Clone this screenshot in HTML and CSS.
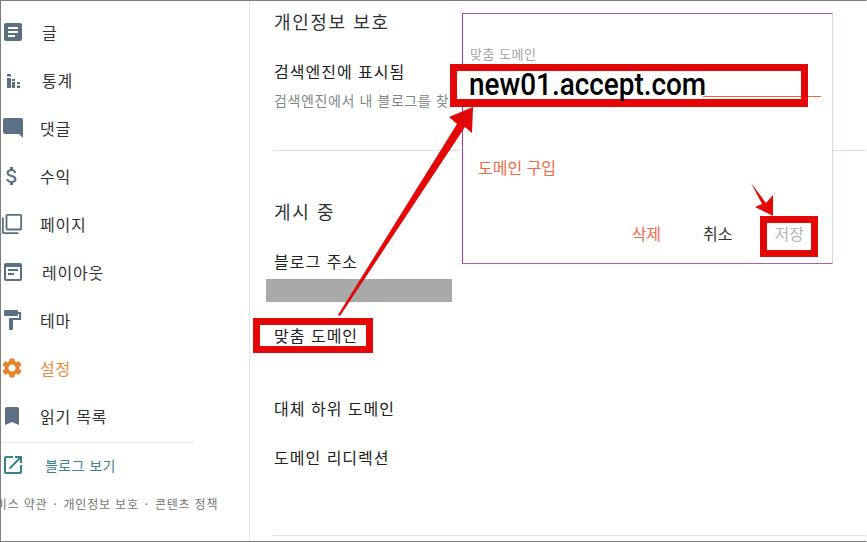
FILE: index.html
```html
<!DOCTYPE html>
<html lang="ko">
<head>
<meta charset="utf-8">
<title>설정</title>
<link rel="stylesheet" href="styles.css">
</head>
<body>
<div class="frame">
  <aside class="sidebar">
    <nav class="nav">
      <a class="item"><svg class="ico" viewBox="0 0 24 24"><path d="M19 3H5c-1.100 0-2 .9-2 2v14c0 1.100.9 2 2 2h14c1.100 0 2-.9 2-2V5c0-1.100-.9-2-2-2zm-5 14H7v-2h7v2zm3-4H7v-2h10v2zm0-4H7V7h10v2z"/></svg><span class="label l2">글</span></a>
      <a class="item"><svg class="ico" viewBox="0 0 24 24"><path d="M6 6h4v2.500H6zM6 10h4v10H6zM11 11h3v2h-3zM11 14h3v6h-3zM16 14h3v2h-3zM16 17.500h3V20h-3z"/></svg><span class="label l2">통계</span></a>
      <a class="item"><svg class="ico" viewBox="0 0 24 24"><path d="M21.990 4c0-1.100-.89-2-1.990-2H4c-1.100 0-2 .9-2 2v12c0 1.100.9 2 2 2h14l4 4-.01-18z"/></svg><span class="label">댓글</span></a>
      <a class="item"><svg class="ico shift" viewBox="0 0 24 24"><path d="M11.800 10.900c-2.270-.59-3-1.200-3-2.150 0-1.090 1.010-1.850 2.700-1.850 1.780 0 2.440.85 2.500 2.100h2.210c-.07-1.720-1.120-3.300-3.210-3.810V3h-3v2.160c-1.940.42-3.500 1.680-3.500 3.610 0 2.310 1.910 3.460 4.700 4.130 2.500.6 3 1.480 3 2.410 0 .69-.49 1.790-2.700 1.790-2.060 0-2.870-.92-2.980-2.100h-2.200c.12 2.190 1.760 3.420 3.680 3.830V21h3v-2.150c1.950-.37 3.500-1.500 3.500-3.550 0-2.840-2.430-3.810-4.700-4.400z"/></svg><span class="label">수익</span></a>
      <a class="item"><svg class="ico small" viewBox="0 0 24 24"><path d="M3 5H1v16c0 1.100.9 2 2 2h16v-2H3V5zm18-4H7c-1.100 0-2 .9-2 2v14c0 1.100.9 2 2 2h14c1.100 0 2-.9 2-2V3c0-1.100-.9-2-2-2zm0 16H7V3h14v14z"/></svg><span class="label">페이지</span></a>
      <a class="item"><svg class="ico" viewBox="0 0 24 24"><path d="M19 3H5c-1.100 0-2 .9-2 2v14c0 1.100.9 2 2 2h14c1.100 0 2-.9 2-2V5c0-1.100-.9-2-2-2zm0 16H5V7h14v12zM7 9h10v2H7zm0 4h6v2H7z"/></svg><span class="label l2">레이아웃</span></a>
      <a class="item"><svg class="ico shift" viewBox="0 0 24 24"><path d="M18 4V3c0-.55-.45-1-1-1H5c-.55 0-1 .45-1 1v4c0 .55.45 1 1 1h12c.55 0 1-.45 1-1V6h1v4H9v11c0 .55.45 1 1 1h2c.55 0 1-.45 1-1v-9h8V4h-3z"/></svg><span class="label">테마</span></a>
      <a class="item active"><svg class="ico shift" viewBox="0 0 24 24"><path d="M19.140 12.940c.04-.3.06-.61.06-.94 0-.32-.02-.64-.07-.94l2.030-1.580c.18-.14.23-.41.12-.61l-1.920-3.320c-.12-.22-.37-.29-.59-.22l-2.390.96c-.5-.38-1.030-.7-1.620-.94l-.36-2.540c-.04-.24-.24-.41-.48-.41h-3.840c-.24 0-.43.17-.47.41l-.36 2.540c-.59.24-1.130.57-1.620.94l-2.390-.96c-.22-.08-.47 0-.59.22L2.740 8.870c-.12.21-.08.47.12.61l2.030 1.580c-.05.3-.09.63-.09.94s.02.64.07.94l-2.030 1.580c-.18.14-.23.41-.12.61l1.920 3.320c.12.22.37.29.59.22l2.390-.96c.5.38 1.030.7 1.620.94l.36 2.540c.05.24.24.41.48.41h3.840c.24 0 .44-.17.47-.41l.36-2.540c.59-.24 1.130-.56 1.620-.94l2.390.96c.22.08.47 0 .59-.22l1.920-3.320c.12-.22.07-.47-.12-.61l-2.010-1.580zM12 15.600c-1.980 0-3.600-1.620-3.600-3.600s1.620-3.600 3.600-3.600 3.600 1.620 3.600 3.600-1.620 3.600-3.600 3.600z"/></svg><span class="label">설정</span></a>
      <a class="item"><svg class="ico shift" viewBox="0 0 24 24"><path d="M17 3H7c-1.100 0-2 .9-2 2v16l7-3 7 3V5c0-1.100-.9-2-2-2z"/></svg><span class="label">읽기 목록</span></a>
    </nav>
    <a class="view"><svg class="ico" viewBox="0 0 24 24"><path d="M19 19H5V5h7V3H5c-1.110 0-2 .9-2 2v14c0 1.100.89 2 2 2h14c1.100 0 2-.9 2-2v-7h-2v7zM14 3v2h3.590l-9.830 9.830 1.410 1.410L19 6.410V10h2V3h-7z"/></svg><span>블로그 보기</span></a>
    <p class="legal"><span>서비스 약관</span><span>·</span><span>개인정보 보호</span><span>·</span><span>콘텐츠 정책</span></p>
  </aside>
  <main class="main">
    <h2 class="heading first">개인정보 보호</h2>
    <div class="row-title search">검색엔진에 표시됨</div>
    <div class="hint">검색엔진에서 내 블로그를 찾</div>
    <hr class="rule">
    <h2 class="heading publishing">게시 중</h2>
    <div class="row-title address">블로그 주소</div>
    <div class="redact"></div>
    <div class="row-title custom">맞춤 도메인</div>
    <div class="row-title alt">대체 하위 도메인</div>
    <div class="row-title redirect">도메인 리디렉션</div>
    <hr class="rule bottom">
  </main>
  <section class="dialog">
    <label class="field-label">맞춤 도메인</label>
    <div class="underline"></div>
    <a class="buy">도메인 구입</a>
    <div class="actions">
      <a class="danger">삭제</a>
      <a class="cancel">취소</a>
      <a class="save">저장</a>
    </div>
  </section>
  <div class="box box-custom"></div>
  <div class="box box-url"><div class="url"><span class="url-text">new01.accept.com</span></div></div>
  <div class="box box-save"></div>
  <svg class="arrows" viewBox="0 0 867 542">
    <path d="M338 315 L457 124 L449 117 L473 107 L472 133 L465 127 L340 316 Z"/>
    <path d="M751 183 L766 203 L773 195 L773 216 L755 207 L762 204 Z"/>
  </svg>
</div>
</body>
</html>
```

FILE: styles.css
```css
* { box-sizing: border-box; }
html, body { margin: 0; padding: 0; }
body {
  width: 867px;
  height: 542px;
  overflow: hidden;
  background: #fff;
  font-family: "Noto Sans CJK KR", "Noto Sans", sans-serif;
  color: #303437;
}
.frame {
  position: relative;
  display: flex;
  width: 867px;
  height: 542px;
  overflow: hidden;
  border: 1px solid #7f7f7f;
  border-right-color: #fff;
}
.sidebar {
  flex: 0 0 249px;
  height: 100%;
  border-right: 1px solid #e6e6e6;
  overflow: hidden;
}
.nav {
  display: flex;
  flex-direction: column;
  padding-top: 7px;
  width: 193px;
  border-bottom: 1px solid #ebebeb;
  height: 442px;
}
.item {
  display: flex;
  align-items: center;
  height: 48px;
  font-size: 16px;
  letter-spacing: .8px;
  color: #303437;
  white-space: nowrap;
}
.ico {
  flex: none;
  width: 24px;
  height: 24px;
  fill: #5b7083;
}
.ico.shift { margin-left: -1px; margin-right: 1px; }
.ico.small { width: 22px; height: 22px; margin-right: 2px; }
.label { margin-left: 15px; }
.label.l2 { margin-left: 17px; }
.item.active { color: #ed8a34; }
.item.active .ico { fill: #e8832a; }
.view {
  display: flex;
  align-items: center;
  height: 44px;
  font-size: 14px;
  letter-spacing: .4px;
  color: #3d8391;
  white-space: nowrap;
}
.view .ico { fill: #38818f; }
.view span { margin-left: 20px; }
.legal {
  display: flex;
  gap: 6px;
  margin: 8px 0 0 -17px;
  font-size: 12px;
  line-height: 18px;
  letter-spacing: .8px;
  color: #757575;
  white-space: nowrap;
}
.main {
  flex: 1;
  padding-left: 24px;
}
.heading {
  margin: 0;
  font-size: 18px;
  font-weight: 400;
  line-height: 24px;
  color: #303437;
  letter-spacing: 1.6px;
}
.heading.first { margin-top: 8px; }
.heading.publishing { margin-top: 48px; }
.row-title { font-size: 16px; line-height: 22px; letter-spacing: 1px; color: #202124; }
.search { margin-top: 27px; }
.hint { margin-top: 9px; font-size: 14px; line-height: 18px; letter-spacing: .6px; color: #80868b; white-space: nowrap; }
.rule { margin: 41px 0 0 -1px; border: 0; border-top: 1px solid #e0e0e0; }
.address { margin-top: 27px; }
.redact { width: 186px; height: 23px; margin: 7px 0 0 -8px; background: #a9a9a9; }
.custom { margin-top: 22px; }
.alt { margin-top: 51px; }
.redirect { margin-top: 27px; }
.rule.bottom { margin-top: 67px; }
.dialog {
  position: absolute;
  left: 461px;
  top: 12px;
  width: 371px;
  height: 251px;
  background: #fff;
  border-top: 1px solid #ab4fb3;
  border-left: 1px solid #a53bb0;
  border-bottom: 1px solid #b35cba;
  border-right: 1px solid #e6cdea;
  padding: 31px 0 0 7px;
  display: flex;
  flex-direction: column;
}
.field-label { font-size: 13px; line-height: 18px; letter-spacing: .5px; color: #a6a6a6; }
.underline { margin: 33px 11px 0 0; height: 1px; background: #f4623a; }
.buy { margin: 60px 0 0 8px; font-size: 16px; line-height: 20px; color: #f0694a; }
.actions {
  display: flex;
  justify-content: flex-end;
  gap: 42px;
  margin-top: 46px;
  padding-right: 28px;
  font-size: 16px;
  line-height: 20px;
}
.danger { color: #f0694a; }
.cancel { color: #303437; }
.save { color: #b5b5b5; }
.box {
  position: absolute;
  border: 7px solid #e30707;
}
.box-custom { left: 252px; top: 317px; width: 120px; height: 35px; }
.box-url {
  left: 449px;
  top: 63px;
  width: 358px;
  height: 43px;
  display: flex;
  align-items: stretch;
  border-bottom-width: 8px;
}
.url {
  width: 246px;
  padding-left: 12px;
  background: #fff;
}
.url-text {
  display: inline-block;
  transform: scaleX(.9);
  transform-origin: left center;
  font-family: "Roboto", "Liberation Sans", sans-serif;
  font-size: 31px;
  font-weight: 500;
  line-height: 28px;
  color: #000;
  white-space: nowrap;
}
.box-save { left: 759px; top: 215px; width: 58px; height: 41px; }
.arrows {
  position: absolute;
  left: -1px;
  top: -1px;
  width: 867px;
  height: 542px;
  fill: #e30707;
}
```
